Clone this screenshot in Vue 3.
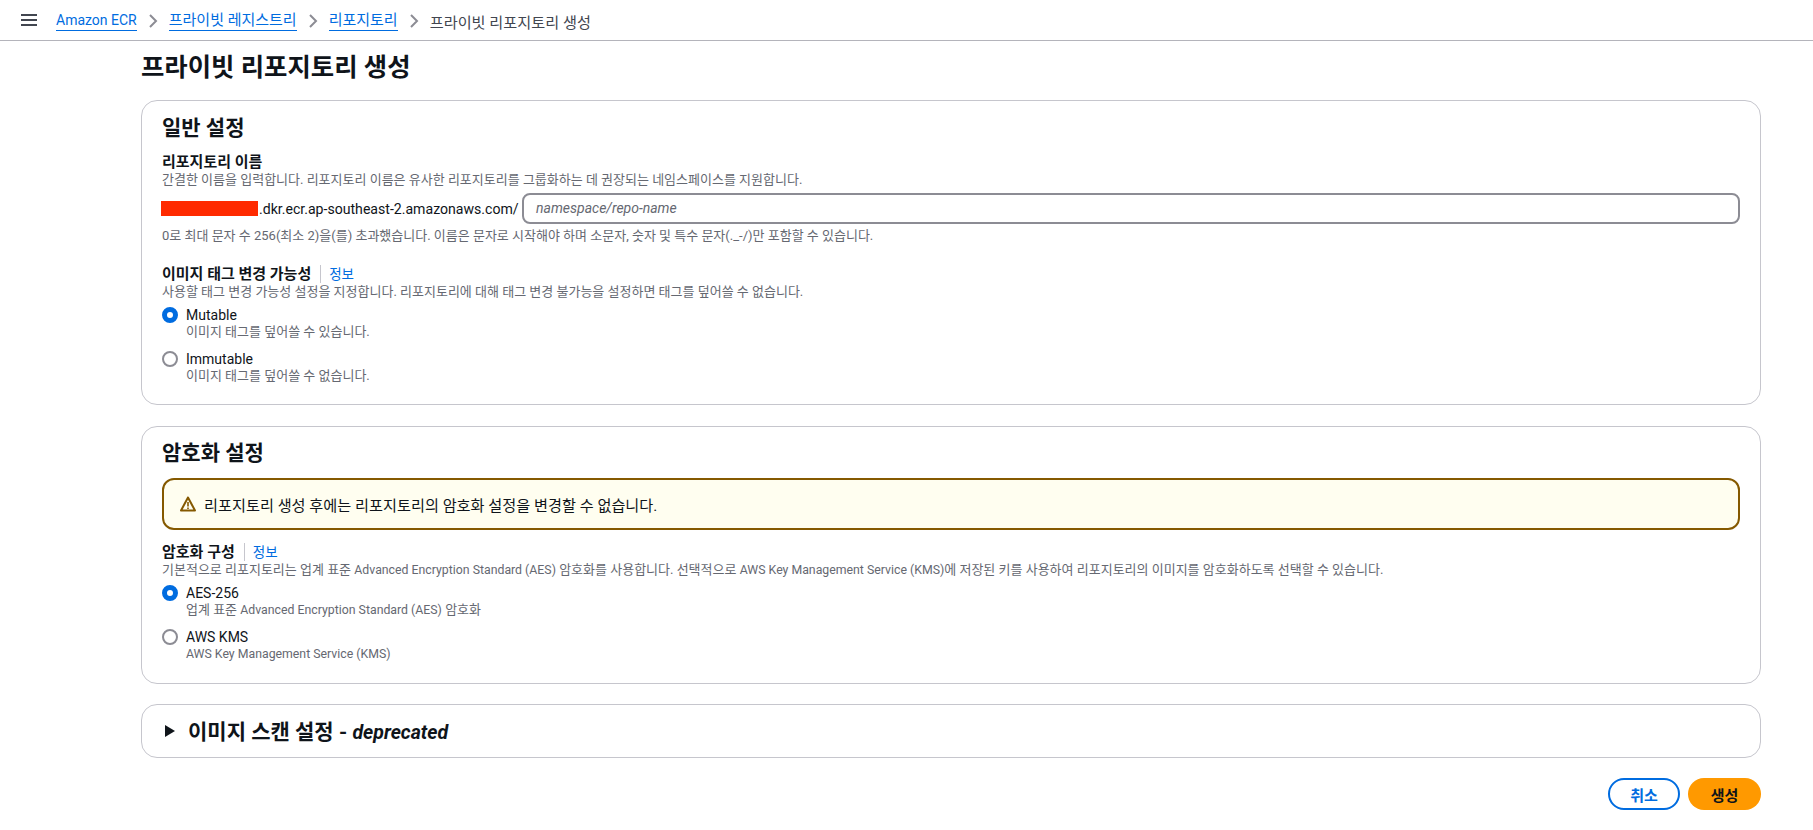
<template>
  <div class="page">
    <header class="topbar">
      <svg class="menu" width="16" height="12" viewBox="0 0 16 12"><path d="M0 1h16M0 6h16M0 11h16" stroke="#424650" stroke-width="2" fill="none" /></svg>
      <nav class="crumbs">
        <template v-for="c in crumbs" :key="c.text">
          <a class="crumb-link" :class="{ latin: c.latin }">{{ c.text }}</a>
          <svg class="chev" width="10" height="16" viewBox="0 0 10 16"><path d="M2 2l6 6-6 6" stroke="#8c8c94" stroke-width="2" fill="none" /></svg>
        </template>
        <span class="crumb-cur">프라이빗 리포지토리 생성</span>
      </nav>
    </header>

    <main class="content">
      <h1 class="title">프라이빗 리포지토리 생성</h1>

      <section class="card card-general">
        <h2 class="card-title">일반 설정</h2>
        <div class="label">리포지토리 이름</div>
        <div class="desc">간결한 이름을 입력합니다. 리포지토리 이름은 유사한 리포지토리를 그룹화하는 데 권장되는 네임스페이스를 지원합니다.</div>
        <div class="repo-row">
          <span class="redact"></span>
          <span class="host">.dkr.ecr.ap-southeast-2.amazonaws.com/</span>
          <div class="input">namespace/repo-name</div>
        </div>
        <div class="desc hint">0로 최대 문자 수 256(최소 2)을(를) 초과했습니다. 이름은 문자로 시작해야 하며 소문자, 숫자 및 특수 문자(._-/)만 포함할 수 있습니다.</div>

        <div class="label-row mt-tag">
          <span class="label">이미지 태그 변경 가능성</span>
          <a class="info">정보</a>
        </div>
        <div class="desc">사용할 태그 변경 가능성 설정을 지정합니다. 리포지토리에 대해 태그 변경 불가능을 설정하면 태그를 덮어쓸 수 없습니다.</div>
        <div class="radios">
          <div class="radio">
            <span class="dot on"></span>
            <div>
              <div class="radio-name">Mutable</div>
              <div class="radio-desc">이미지 태그를 덮어쓸 수 있습니다.</div>
            </div>
          </div>
          <div class="radio">
            <span class="dot"></span>
            <div>
              <div class="radio-name">Immutable</div>
              <div class="radio-desc">이미지 태그를 덮어쓸 수 없습니다.</div>
            </div>
          </div>
        </div>
      </section>

      <section class="card card-enc">
        <h2 class="card-title">암호화 설정</h2>
        <div class="alert">
          <svg width="16" height="16" viewBox="0 0 16 16"><path d="M8 1.5L1 14.5h14z" stroke="#855900" stroke-width="2" stroke-linejoin="round" fill="none" /><path d="M8 6v4.5M8 11.5v1.5" stroke="#855900" stroke-width="1.6" fill="none" /></svg>
          <span>리포지토리 생성 후에는 리포지토리의 암호화 설정을 변경할 수 없습니다.</span>
        </div>
        <div class="label-row mt-enc">
          <span class="label">암호화 구성</span>
          <a class="info">정보</a>
        </div>
        <div class="desc">기본적으로 리포지토리는 업계 표준 <span class="lat">Advanced Encryption Standard (AES)</span> 암호화를 사용합니다. 선택적으로 <span class="lat">AWS Key Management Service (KMS)</span>에 저장된 키를 사용하여 리포지토리의 이미지를 암호화하도록 선택할 수 있습니다.</div>
        <div class="radios">
          <div class="radio">
            <span class="dot on"></span>
            <div>
              <div class="radio-name">AES-256</div>
              <div class="radio-desc">업계 표준 <span class="lat">Advanced Encryption Standard (AES)</span> 암호화</div>
            </div>
          </div>
          <div class="radio">
            <span class="dot"></span>
            <div>
              <div class="radio-name">AWS KMS</div>
              <div class="radio-desc"><span class="lat">AWS Key Management Service (KMS)</span></div>
            </div>
          </div>
        </div>
      </section>

      <section class="card card-scan">
        <svg width="10" height="12" viewBox="0 0 10 12"><path d="M0 0l10 6-10 6z" fill="#0f141a" /></svg>
        <h2 class="scan-title">이미지 스캔 설정 - <em>deprecated</em></h2>
      </section>

      <div class="actions">
        <button class="btn cancel">취소</button>
        <button class="btn create">생성</button>
      </div>
    </main>
  </div>
</template>

<script setup>
const crumbs = [
  { text: 'Amazon ECR', latin: true },
  { text: '프라이빗 레지스트리' },
  { text: '리포지토리' }
]
</script>

<style>
body { margin: 0; background: #fff; }
</style>

<style scoped>
.page {
  font-family: Roboto, "Noto Sans CJK KR", sans-serif;
  color: #0f141a;
  font-size: 14px;
}
.topbar {
  height: 40px;
  border-bottom: 1px solid #b4b4bb;
  display: flex;
  align-items: center;
  padding-left: 21px;
  background: #fff;
}
.crumbs { display: flex; align-items: center; margin-left: 19px; padding-top: 1px; font-size: 15px; }
.crumb-link {
  color: #006ce0;
  line-height: 18px;
  border-bottom: 1px solid #006ce0;
  padding-bottom: 1px;
}
.crumb-link.latin { font-size: 14px; }
.crumb-cur { color: #424650; font-size: 15.2px; }
.chev { margin: 0 11px; }
.content { padding: 9px 52px 0 141px; }
.title { margin: 0 0 16px; font-size: 25.4px; line-height: 34px; font-weight: 700; }
.card {
  border: 1px solid #c6c6cd;
  border-radius: 16px;
  padding: 0 20px;
  background: #fff;
}
.card-general { padding-top: 12px; padding-bottom: 20px; }
.card-enc { margin-top: 21px; padding-top: 11px; padding-bottom: 21px; }
.card-scan {
  margin-top: 20px;
  height: 52px;
  display: flex;
  align-items: center;
  gap: 13px;
  padding-left: 23px;
}
.card-title { margin: 0 0 10px; font-size: 21px; line-height: 30px; font-weight: 700; }
.scan-title { margin: 3px 0 0; font-size: 21px; line-height: 30px; font-weight: 700; }
.scan-title em { font-size: 19.5px; }
.label { font-size: 15px; line-height: 18px; font-weight: 700; }
.desc { font-size: 13px; line-height: 18px; color: #656871; white-space: nowrap; }
.lat { font-size: 12.3px; }
.repo-row { display: flex; align-items: center; margin-top: 4px; height: 31px; }
.redact { width: 97px; height: 15px; background: #ff2a00; margin-left: -1px; flex: none; }
.host { width: 260px; font-size: 14.1px; margin-left: 1px; margin-right: 3px; white-space: nowrap; flex: none; }
.input {
  flex: 1;
  box-sizing: border-box;
  height: 31px;
  border: 2px solid #8c8c94;
  border-radius: 8px;
  padding: 0 12px;
  line-height: 27px;
  font-style: italic;
  color: #656871;
}
.hint { margin-top: 3px; }
.label-row { display: flex; align-items: center; height: 18px; }
.mt-tag { margin-top: 20px; }
.mt-enc { margin-top: 13px; }
.info {
  color: #006ce0;
  font-size: 13.5px;
  font-weight: 400;
  margin-left: 9px;
  padding-left: 8px;
  border-left: 1px solid #c6c6cd;
  line-height: 18px;
}
.radios { margin-top: 5px; display: flex; flex-direction: column; gap: 10px; }
.radio { display: flex; gap: 8px; }
.dot {
  width: 16px;
  height: 16px;
  box-sizing: border-box;
  border-radius: 50%;
  border: 2px solid #8c8c94;
  margin-top: 1px;
  flex: none;
}
.dot.on { border: 5px solid #006ce0; }
.radio-name { font-size: 14px; line-height: 18px; }
.radio-desc { font-size: 13px; line-height: 16px; color: #656871; }
.alert {
  box-sizing: border-box;
  height: 52px;
  border: 2px solid #855900;
  border-radius: 12px;
  background: #fffef0;
  display: flex;
  align-items: center;
  gap: 8px;
  padding-left: 16px;
  font-size: 15.2px;
}
.actions { display: flex; justify-content: flex-end; gap: 8px; margin-top: 20px; }
.btn {
  width: 72px;
  height: 32px;
  border-radius: 16px;
  font: 700 15px Roboto, "Noto Sans CJK KR", sans-serif;
  padding: 0;
}
.cancel { background: #fff; border: 2px solid #006ce0; color: #006ce0; }
.create { width: 73px; background: #ff9900; border: 0; color: #0f141a; }
</style>
